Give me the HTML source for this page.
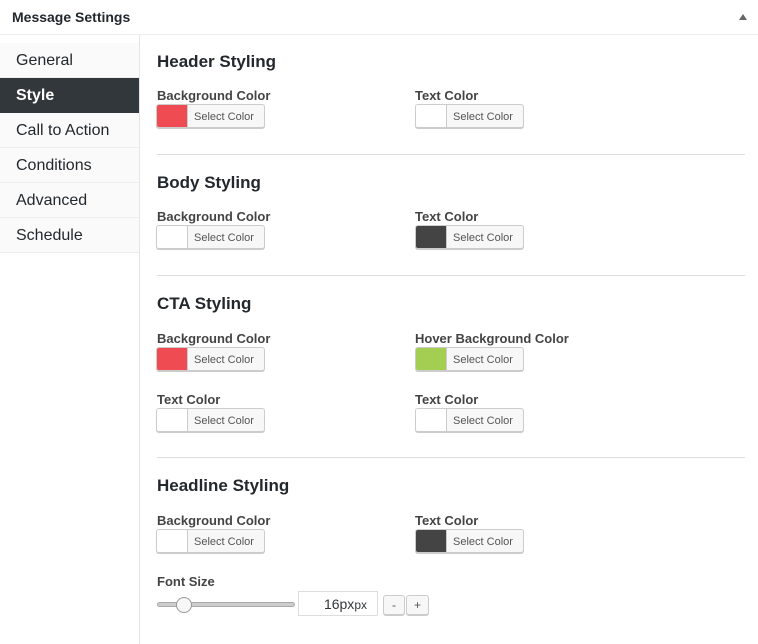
<!DOCTYPE html>
<html><head><meta charset="utf-8"><style>
*{box-sizing:border-box;margin:0;padding:0}
body{width:758px;height:644px;background:#fff;font-family:"Liberation Sans",Arial,sans-serif;color:#23282d;position:relative;overflow:hidden}
.a{position:absolute}
.hd{left:0;top:0;width:758px;height:35px;border-bottom:1px solid #eee;}
.hd span{position:absolute;left:12px;top:9px;font-size:14px;font-weight:bold;color:#23282d}
.tri{position:absolute;left:739px;top:14px;width:0;height:0;border-left:4px solid transparent;border-right:4px solid transparent;border-bottom:6px solid #666}
.side{left:0;top:43px;width:139px}
.side div{height:35px;border-bottom:1px solid #eee;background:#fafafa;font-size:16px;line-height:36px;padding-left:16px;color:#23282d}
.side div.on{background:#32373c;color:#fff;font-weight:bold;border-bottom-color:#32373c}
.vline{left:139px;top:35px;width:1px;height:609px;background:#e5e5e5}
h3{position:absolute;left:157px;font-size:17px;font-weight:bold;color:#23282d}
.lbl{position:absolute;font-size:13px;font-weight:bold;color:#444}
.cp{position:absolute;width:109px;height:24px;border:1px solid #ccc;border-radius:3px;background:#f7f7f7;box-shadow:0 1px 0 #ccc;overflow:hidden}
.cp i{position:absolute;left:0;top:0;width:31px;height:22px;border-right:1px solid #ccc}
.cp span{position:absolute;left:37px;top:6px;font-size:11px;color:#555}
.sep{left:157px;width:588px;height:1px;background:#ddd}
</style></head><body>
<div class="a hd"><span>Message Settings</span><div class="tri"></div></div>
<div class="a vline"></div>
<div class="a side">
<div>General</div><div class="on">Style</div><div>Call to Action</div><div>Conditions</div><div>Advanced</div><div>Schedule</div>
</div>

<h3 style="top:52px">Header Styling</h3>
<div class="lbl" style="left:157px;top:88px">Background Color</div>
<div class="cp" style="left:156px;top:104px"><i style="background:#ef4b53"></i><span>Select Color</span></div>
<div class="lbl" style="left:415px;top:88px">Text Color</div>
<div class="cp" style="left:415px;top:104px"><i style="background:#fff"></i><span>Select Color</span></div>
<div class="a sep" style="top:154px"></div>

<h3 style="top:173px">Body Styling</h3>
<div class="lbl" style="left:157px;top:209px">Background Color</div>
<div class="cp" style="left:156px;top:225px"><i style="background:#fff"></i><span>Select Color</span></div>
<div class="lbl" style="left:415px;top:209px">Text Color</div>
<div class="cp" style="left:415px;top:225px"><i style="background:#444"></i><span>Select Color</span></div>
<div class="a sep" style="top:275px"></div>

<h3 style="top:294px">CTA Styling</h3>
<div class="lbl" style="left:157px;top:331px">Background Color</div>
<div class="cp" style="left:156px;top:347px"><i style="background:#ef4b53"></i><span>Select Color</span></div>
<div class="lbl" style="left:415px;top:331px">Hover Background Color</div>
<div class="cp" style="left:415px;top:347px"><i style="background:#a3ce52"></i><span>Select Color</span></div>
<div class="lbl" style="left:157px;top:392px">Text Color</div>
<div class="cp" style="left:156px;top:408px"><i style="background:#fff"></i><span>Select Color</span></div>
<div class="lbl" style="left:415px;top:392px">Text Color</div>
<div class="cp" style="left:415px;top:408px"><i style="background:#fff"></i><span>Select Color</span></div>
<div class="a sep" style="top:457px"></div>

<h3 style="top:476px">Headline Styling</h3>
<div class="lbl" style="left:157px;top:513px">Background Color</div>
<div class="cp" style="left:156px;top:529px"><i style="background:#fff"></i><span>Select Color</span></div>
<div class="lbl" style="left:415px;top:513px">Text Color</div>
<div class="cp" style="left:415px;top:529px"><i style="background:#444"></i><span>Select Color</span></div>

<div class="lbl" style="left:157px;top:574px">Font Size</div>
<div class="a" style="left:157px;top:602px;width:138px;height:5px;border-radius:3px;background:#ccc;border:1px solid #aaa"></div>
<div class="a" style="left:176px;top:597px;width:16px;height:16px;border-radius:50%;background:#f7f7f7;border:1px solid #999"></div>
<div class="a" style="left:298px;top:591px;width:80px;height:25px;border:1px solid #ddd;background:#fff;font-size:14px;line-height:25px;text-align:right;padding-right:10px;color:#32373c">16px<span style="font-size:12px">px</span></div>
<div class="a" style="left:383px;top:595px;width:22px;height:20px;border:1px solid #ccc;border-radius:3px;background:#f7f7f7;font-size:12px;line-height:18px;text-align:center;color:#555;box-shadow:0 1px 0 #ccc">-</div>
<div class="a" style="left:406px;top:595px;width:23px;height:20px;border:1px solid #ccc;border-radius:3px;background:#f7f7f7;font-size:12px;line-height:18px;text-align:center;color:#555;box-shadow:0 1px 0 #ccc">+</div>
</body></html>
